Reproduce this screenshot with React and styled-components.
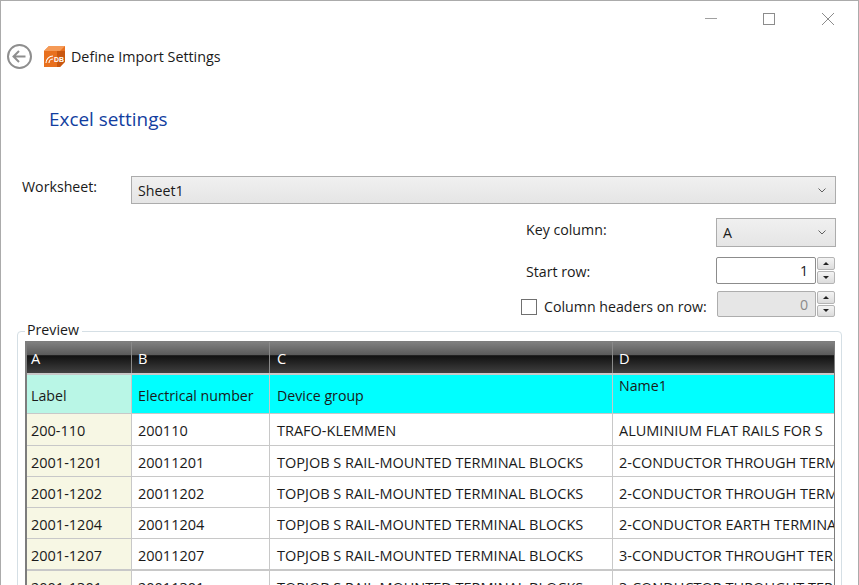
import styled, { createGlobalStyle } from 'styled-components'

const COLUMNS = [
  { letter: 'A', width: 105, pad: 4 },
  { letter: 'B', width: 138, pad: 6 },
  { letter: 'C', width: 343, pad: 7 },
  { letter: 'D', width: 222, pad: 6 },
]

const ROWS = [
  ['200-110', '200110', 'TRAFO-KLEMMEN', 'ALUMINIUM FLAT RAILS FOR S'],
  ['2001-1201', '20011201', 'TOPJOB S RAIL-MOUNTED TERMINAL BLOCKS', '2-CONDUCTOR THROUGH TERMINAL BLOCK'],
  ['2001-1202', '20011202', 'TOPJOB S RAIL-MOUNTED TERMINAL BLOCKS', '2-CONDUCTOR THROUGH TERMINAL BLOCK'],
  ['2001-1204', '20011204', 'TOPJOB S RAIL-MOUNTED TERMINAL BLOCKS', '2-CONDUCTOR EARTH TERMINAL BLOCK'],
  ['2001-1207', '20011207', 'TOPJOB S RAIL-MOUNTED TERMINAL BLOCKS', '3-CONDUCTOR THROUGHT TERMINAL BLOCK'],
  ['2001-1301', '20011301', 'TOPJOB S RAIL-MOUNTED TERMINAL BLOCKS', '3-CONDUCTOR THROUGHT TERMINAL BLOCK'],
]

const Global = createGlobalStyle`
  html, body { margin: 0; padding: 0; background: #fff; overflow: hidden; }
  body { font-family: "Open Sans", "Noto Sans", sans-serif; color: #1a1a1a; }
`

const Window = styled.div`
  position: relative;
  width: 859px;
  height: 585px;
  box-sizing: border-box;
  overflow: hidden;
  background: #fff;
  border: solid #ababab;
  border-width: 1px 1px 0 1px;
`

const Caption = styled.svg`
  position: absolute;
  left: 704px;
  top: 12px;
`

const Header = styled.div`
  position: absolute;
  left: 5px;
  top: 42px;
  display: flex;
  align-items: center;
`

const HeaderIcon = styled.svg`
  margin-left: ${p => p.$gap || 0}px;
`

const HeaderTitle = styled.span`
  margin-left: 6px;
  font-size: 14.3px;
  line-height: 24px;
`

const SectionTitle = styled.h1`
  position: absolute;
  left: 48px;
  top: 105px;
  margin: 0;
  font-size: 18.9px;
  font-weight: 400;
  line-height: 26px;
  color: #123ea0;
`

const Label = styled.label`
  position: absolute;
  left: ${p => p.$x}px;
  top: ${p => p.$y}px;
  font-size: 14.2px;
  line-height: 20px;
  white-space: nowrap;
`

const Combo = styled.div`
  position: absolute;
  left: ${p => p.$x}px;
  top: ${p => p.$y}px;
  width: ${p => p.$w}px;
  height: ${p => p.$h}px;
  box-sizing: border-box;
  display: flex;
  align-items: center;
  justify-content: space-between;
  padding: 0 9px 0 6px;
  border: 1px solid #acacac;
  background: linear-gradient(#f0f0f0, #e5e5e5);
  font-size: 14.2px;
`

const Spin = styled.div`
  position: absolute;
  left: ${p => p.$x}px;
  top: ${p => p.$y}px;
  width: ${p => p.$w}px;
  height: ${p => p.$h}px;
  display: flex;
  justify-content: space-between;
`

const SpinInput = styled.div`
  flex: 1;
  margin-right: 1px;
  box-sizing: border-box;
  padding-right: 7px;
  border: 1px solid ${p => (p.$disabled ? '#adadad' : '#8c8c8c')};
  border-radius: 2px;
  background: ${p => (p.$disabled ? '#e6e6e6' : '#fff')};
  color: ${p => (p.$disabled ? '#8a8a8a' : '#1a1a1a')};
  font-size: 14.2px;
  line-height: 25px;
  text-align: right;
`

const SpinButtons = styled.div`
  width: 18px;
  display: flex;
  flex-direction: column;
  gap: 1px;
`

const SpinButton = styled.div`
  flex: 1;
  display: flex;
  align-items: center;
  justify-content: center;
  box-sizing: border-box;
  border: 1px solid #b4b4b4;
  border-radius: 2px;
  background: linear-gradient(#f4f4f4, #dcdcdc);
`

const Arrow = styled.i`
  width: 0;
  height: 0;
  border-left: 3px solid transparent;
  border-right: 3px solid transparent;
  border-${p => (p.$down ? 'top' : 'bottom')}: 3px solid #222;
`

const Check = styled.div`
  position: absolute;
  left: 520px;
  top: 298px;
  width: 16px;
  height: 16px;
  box-sizing: border-box;
  border: 1px solid #707070;
  background: #fff;
`

const Group = styled.div`
  position: absolute;
  left: 16px;
  top: 330px;
  width: 825px;
  height: 300px;
  box-sizing: border-box;
  border: 1px solid #d5dfe5;
  border-radius: 4px;
`

const GroupLegend = styled.span`
  position: absolute;
  left: 7px;
  top: -12px;
  padding: 0 3px 0 2px;
  background: #fff;
  font-size: 14.2px;
  line-height: 20px;
`

const Grid = styled.div`
  position: absolute;
  left: 24px;
  top: 340px;
  width: 810px;
  height: 260px;
  overflow: hidden;
  box-sizing: border-box;
  border-left: 2px solid #7d7d7d;
  border-top: 1px solid #7d7d7d;
  border-right: 1px solid #7d7d7d;
`

const Row = styled.div`
  display: flex;
  height: ${p => p.$h}px;
  box-sizing: border-box;
  border-bottom: ${p => p.$line || 1}px solid #c8c8c8;
`

const LetterCell = styled.div`
  width: ${p => p.$w}px;
  flex: none;
  box-sizing: border-box;
  padding: 6px 0 0 ${p => p.$pad}px;
  border-right: 1px solid #8a8a8a;
  background: linear-gradient(#808080 0, #5a5a5a 42%, #111 44%, #404040 100%);
  color: #fff;
  font-size: 14.6px;
  line-height: 20px;
`

const NameCell = styled.div`
  width: ${p => p.$w}px;
  flex: none;
  box-sizing: border-box;
  padding: ${p => (p.$top ? '1px' : '11px')} 0 0 ${p => p.$pad}px;
  border-right: 1px solid #c8c8c8;
  background: ${p => (p.$first ? '#b9f6e6' : '#00ffff')};
  font-size: 14.2px;
  line-height: 20px;
  white-space: nowrap;
`

const Cell = styled.div`
  width: ${p => p.$w}px;
  flex: none;
  box-sizing: border-box;
  overflow: hidden;
  padding: 7px 0 0 ${p => p.$pad}px;
  border-right: 1px solid #c8c8c8;
  background: ${p => (p.$first ? '#f7f7e4' : '#fff')};
  font-size: 14.5px;
  line-height: 20px;
  white-space: nowrap;
`

const IconLetters = styled.text`
  font-family: "Liberation Sans", sans-serif;
  font-size: 8px;
  font-weight: 700;
  fill: #fff;
`

function Chevron() {
  return (
    <svg width="8" height="5" viewBox="0 0 8 5">
      <path d="M.5.5L4 4 7.500.5" fill="none" stroke="#606060" />
    </svg>
  )
}

function BackIcon() {
  return (
    <HeaderIcon width="27" height="27" viewBox="0 0 27 27">
      <circle cx="13.500" cy="13.500" r="11.500" fill="#fff" stroke="#8e8e8e" strokeWidth="2" />
      <path d="M7.500 13.500h12M13 8l-5.500 5.500L13 19" fill="none" stroke="#8e8e8e" strokeWidth="2" />
    </HeaderIcon>
  )
}

function ImportIcon() {
  return (
    <HeaderIcon $gap={11} width="21" height="21" viewBox="0 0 21 21">
      <path d="M0 5l5-5h16v15l-5 6H0z" fill="#e8701e" />
      <path d="M0 5l5-5h16l-5 5z" fill="#f59a57" />
      <path d="M13 5h8v11l-5 5h-3z" fill="#c9570f" />
      <path d="M2 17a7 7 0 0 1 7-7M5 17a4 4 0 0 1 4-4" fill="none" stroke="#fff" strokeWidth="1.100" />
      <IconLetters x="10" y="16" textLength="10" lengthAdjust="spacingAndGlyphs">DB</IconLetters>
    </HeaderIcon>
  )
}

function Spinner({ x, y, w, h, value, disabled }) {
  return (
    <Spin $x={x} $y={y} $w={w} $h={h}>
      <SpinInput $disabled={disabled}>{value}</SpinInput>
      <SpinButtons>
        <SpinButton><Arrow /></SpinButton>
        <SpinButton><Arrow $down /></SpinButton>
      </SpinButtons>
    </Spin>
  )
}

export default function App() {
  return (
    <Window>
      <Global />
      <Caption width="132" height="13" viewBox="0 0 132 13">
        <path d="M0 5.500h12" stroke="#a0a0a0" fill="none" />
        <rect x="58.500" y="0.500" width="11" height="11" stroke="#8c8c8c" fill="none" />
        <path d="M117 0l12 12M129 0l-12 12" stroke="#8c8c8c" fill="none" />
      </Caption>

      <Header>
        <BackIcon />
        <ImportIcon />
        <HeaderTitle>Define Import Settings</HeaderTitle>
      </Header>

      <SectionTitle>Excel settings</SectionTitle>

      <Label $x={21} $y={176}>Worksheet:</Label>
      <Combo $x={130} $y={175} $w={705} $h={28}>Sheet1<Chevron /></Combo>

      <Label $x={525} $y={219}>Key column:</Label>
      <Combo $x={715} $y={217} $w={120} $h={29}>A<Chevron /></Combo>

      <Label $x={525} $y={261}>Start row:</Label>
      <Spinner x={715} y={256} w={119} h={27} value="1" />

      <Check />
      <Label $x={543} $y={296}>Column headers on row:</Label>
      <Spinner x={716} y={290} w={118} h={26} value="0" disabled />

      <Group>
        <GroupLegend>Preview</GroupLegend>
      </Group>

      <Grid>
        <Row $h={33} $line={2}>
          {COLUMNS.map(c => <LetterCell key={c.letter} $w={c.width} $pad={c.pad}>{c.letter}</LetterCell>)}
        </Row>
        <Row $h={39}>
          <NameCell $w={COLUMNS[0].width} $pad={COLUMNS[0].pad} $first>Label</NameCell>
          <NameCell $w={COLUMNS[1].width} $pad={COLUMNS[1].pad}>Electrical number</NameCell>
          <NameCell $w={COLUMNS[2].width} $pad={COLUMNS[2].pad}>Device group</NameCell>
          <NameCell $w={COLUMNS[3].width} $pad={COLUMNS[3].pad} $top>Name1</NameCell>
        </Row>
        {ROWS.map((row, i) => (
          <Row key={row[0]} $h={i === 0 ? 32 : i === 4 ? 32 : 31} $line={i === 4 ? 2 : 1}>
            {row.map((text, j) => (
              <Cell key={j} $w={COLUMNS[j].width} $pad={COLUMNS[j].pad} $first={j === 0}>{text}</Cell>
            ))}
          </Row>
        ))}
      </Grid>
    </Window>
  )
}
